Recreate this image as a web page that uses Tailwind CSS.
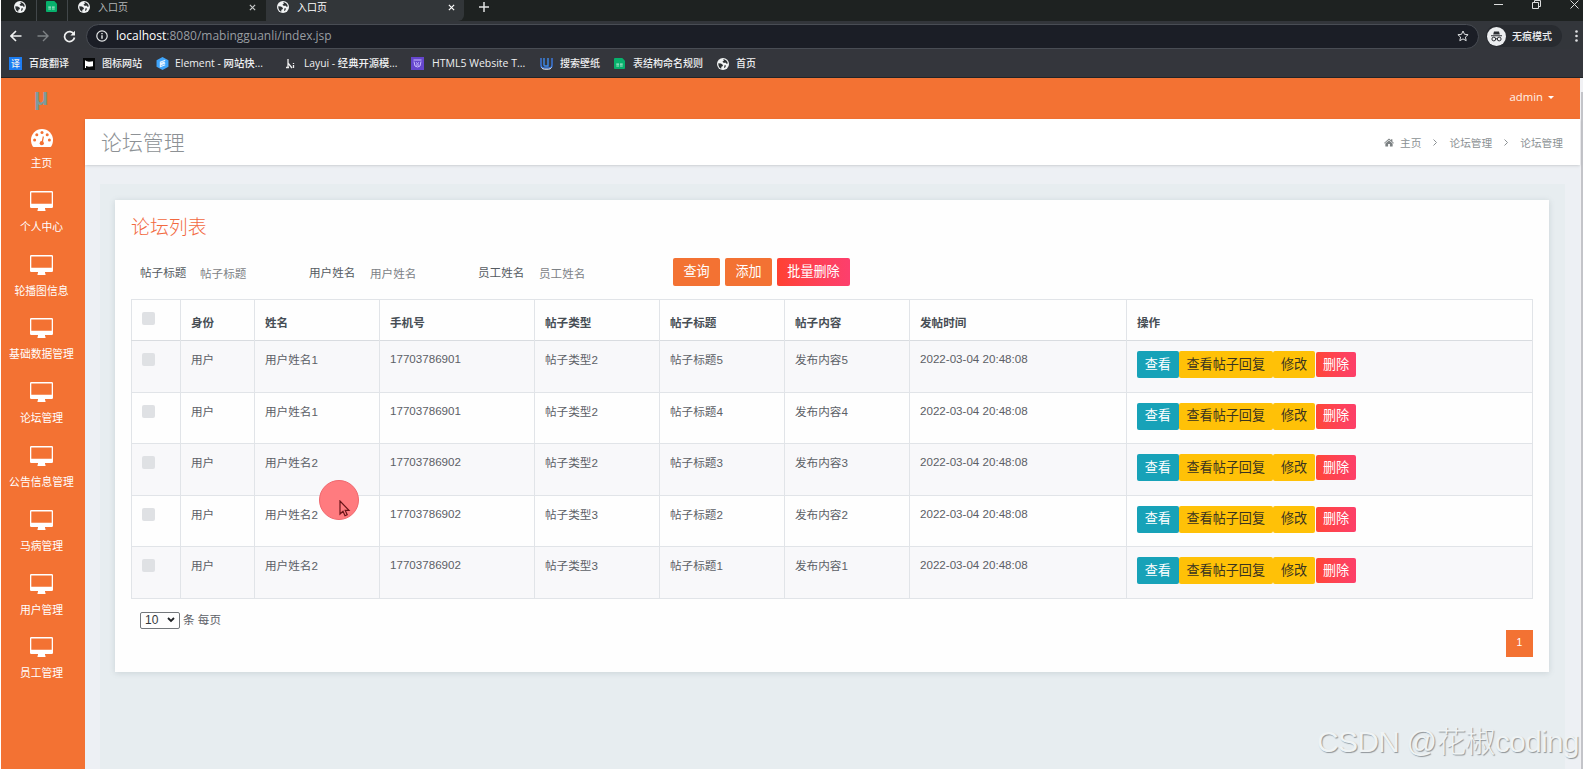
<!DOCTYPE html>
<html lang="zh-CN">
<head>
  <meta charset="UTF-8">
  <meta name="viewport" content="width=device-width, initial-scale=1.0">
  <title>入口页</title>
  <script src="https://cdn.jsdelivr.net/npm/@tailwindcss/browser@4"></script>
</head>
<body class="relative h-[769px] w-[1583px] overflow-hidden bg-white pl-px font-['Liberation_Sans','Noto_Sans_CJK_SC',sans-serif]">

  <svg class="hidden">
    <symbol id="globe" viewBox="0 0 12 12">
      <circle cx="6" cy="6" r="6" fill="#f1f3f4"/>
      <path d="M1.300 5.200 4 5.600l2 1.300-.4 1.300-1.200.5-.2 2C2.300 9.900 1.200 8 1.300 5.200zM6 1.200l1 1.300-1.600 1.200L7 5l1.300-.6 1.200 1.300 1.300-.2C10.600 3 8.600 1.200 6 1.200zM7.500 7.300l1.600.3-.9 1.900-1.200.4z" fill="#2b2f31"/>
    </symbol>
    <symbol id="sheet" viewBox="0 0 12 12">
      <path d="M0 1a1 1 0 0 1 1-1h8l3 3v8a1 1 0 0 1-1 1H1a1 1 0 0 1-1-1z" fill="#07b06c"/>
      <path d="M2.500 6h3v1.300h-3zM6.500 6h3v1.300h-3zM2.500 8.200h3v1.200h-3zM6.500 8.200h3v1.200h-3z" fill="#a8e8cb"/>
    </symbol>
    <symbol id="close" viewBox="0 0 8 8">
      <path d="M1 1l6 6M7 1 1 7" stroke="currentColor" stroke-width="1.400" fill="none"/>
    </symbol>
    <symbol id="desktop" viewBox="0 0 23 20">
      <path fill-rule="evenodd" d="M1.300 0h20.400A1.300 1.300 0 0 1 23 1.300v14.400a1.300 1.300 0 0 1-1.300 1.300H15v1.500h.5V20h-8v-1.500H8V17H1.300A1.300 1.300 0 0 1 0 15.700V1.300A1.300 1.300 0 0 1 1.300 0zM1.300 1.500v11.200h20.400V1.500z" fill="#fff"/>
    </symbol>
    <symbol id="dashboard" viewBox="0 0 22 18">
      <path d="M11 0a11 11 0 0 1 11 11c0 2.300-.6 4.300-1.600 6.200-.3.500-.7.800-1.200.8H2.800c-.5 0-.9-.3-1.200-.8C.6 15.300 0 13.300 0 11A11 11 0 0 1 11 0z" fill="#fff"/>
      <g fill="#f37233"><circle cx="3.600" cy="11" r="1.500"/><circle cx="5.800" cy="5.700" r="1.500"/><circle cx="11" cy="3.500" r="1.500"/><circle cx="16.200" cy="5.700" r="1.500"/><circle cx="18.400" cy="11" r="1.500"/><circle cx="10.800" cy="14.200" r="2.100"/></g>
      <path d="M11 14l1.400-6.500" stroke="#f37233" stroke-width="1.200"/>
    </symbol>
  </svg>

  <!-- Browser tabs -->
  <div class="flex h-[21px] bg-[#1e2221] text-[11px] leading-[15px] text-[#b4b7b8]">
    <div class="flex w-[35px] pl-[13px] pt-px"><svg class="size-3"><use href="#globe"/></svg></div>
    <div class="flex w-8 border-x border-[#42474a] pl-[9px] pt-px"><svg class="size-[11px]"><use href="#sheet"/></svg></div>
    <div class="flex w-[198px] pl-[10px] pt-px">
      <svg class="size-3"><use href="#globe"/></svg>
      <span class="ml-2 -mt-px w-[151px] text-[10px]">入口页</span>
      <svg class="mt-[3px] size-[7px] text-[#c8caca]"><use href="#close"/></svg>
    </div>
    <div class="flex w-[198px] rounded-br-md bg-[#323639] pl-[11px] pt-px text-white">
      <svg class="size-3"><use href="#globe"/></svg>
      <span class="ml-2 -mt-px w-[151px] text-[10px]">入口页</span>
      <svg class="mt-[3px] size-[7px]"><use href="#close"/></svg>
    </div>
    <svg class="ml-[15px] mt-[2px] size-[10px]" viewBox="0 0 10 10"><path d="M5 0v10M0 5h10" stroke="#e2e4e4" stroke-width="1.500"/></svg>
    <div class="ml-auto flex gap-[29px] pr-[4px] text-[#dcdddd]">
      <svg class="mt-1 h-[2px] w-[9px]"><path d="M0 .5h9" stroke="currentColor"/></svg>
      <svg class="h-[9px] w-[9px]" viewBox="0 0 9 9"><path d="M.5 2.500h6v6h-6zM2.500 2.500v-2h6v6h-2" stroke="currentColor" fill="none"/></svg>
      <svg class="size-[9px]" viewBox="0 0 9 9"><path d="M.5.500l8 8M8.500.500l-8 8" stroke="currentColor" fill="none"/></svg>
    </div>
  </div>

  <!-- Address bar -->
  <div class="flex h-[28px] items-center bg-[#33363b] pt-[2px]">
    <svg class="ml-[9px] size-[12px]" viewBox="0 0 12 12"><path d="M11.500 6H1.500M6 1 1 6l5 5" stroke="#f0f1f1" stroke-width="1.600" fill="none"/></svg>
    <svg class="ml-[15px] size-[12px]" viewBox="0 0 12 12"><path d="M.5 6h10M6 1l5 5-5 5" stroke="#7e8285" stroke-width="1.400" fill="none"/></svg>
    <svg class="ml-[14px] size-[13px]" viewBox="0 0 13 13"><path d="M11 4.200A5 5 0 1 0 11.500 7.500" stroke="#f0f1f1" stroke-width="1.700" fill="none"/><path d="M12 .8v4.600H7.400z" fill="#f0f1f1"/></svg>
    <div class="ml-[10px] flex h-[25px] w-[1393px] items-center rounded-full border border-[#494d54] bg-[#1b1e26] pl-[9px] pr-[9px]">
      <svg class="size-[12px]" viewBox="0 0 12 12"><circle cx="6" cy="6" r="5.200" stroke="#e6e8e9" stroke-width="1.200" fill="none"/><path d="M6 5.200v3.600M6 3v1.300" stroke="#e6e8e9" stroke-width="1.400"/></svg>
      <span class="ml-[8px] whitespace-nowrap font-['Open_Sans',sans-serif] text-[12px] text-[#999da1]"><span class="text-white">localhost</span>:8080/mabingguanli/index.jsp</span>
      <svg class="ml-auto size-[12px]" viewBox="0 0 12 12"><path d="M6 1l1.500 3.300 3.600.4-2.700 2.400.8 3.600L6 8.900l-3.200 1.800.8-3.600L.9 4.700l3.600-.4z" stroke="#dfe1e3" fill="none"/></svg>
    </div>
    <div class="ml-[7px] flex h-[22px] w-[76px] items-center rounded-full bg-[#282b30] pl-px">
      <svg class="size-[19px]" viewBox="0 0 19 19"><circle cx="9.500" cy="9.500" r="9.500" fill="#eceef0"/><path d="M6.200 7.500 7 4.500h5l.8 3zM4 8.200h11v1H4z" fill="#2b2e33"/><g stroke="#2b2e33" fill="none"><circle cx="6.800" cy="12" r="1.900"/><circle cx="12.200" cy="12" r="1.900"/><path d="M8.700 11.800h1.600"/></g></svg>
      <span class="ml-[6px] text-[10px] font-medium text-[#eceef0]">无痕模式</span>
    </div>
    <svg class="ml-[13px] h-3 w-[3px]" viewBox="0 0 3 12"><g fill="#dfe1e3"><circle cx="1.500" cy="1.500" r="1.300"/><circle cx="1.500" cy="6" r="1.300"/><circle cx="1.500" cy="10.500" r="1.300"/></g></svg>
  </div>

  <!-- Bookmarks -->
  <div class="flex h-[29px] items-center border-b border-[#222427] bg-[#34363c] pt-px font-['Open_Sans','Noto_Sans_CJK_SC',sans-serif] text-[10px] font-medium whitespace-nowrap text-[#eff0f1]">
    <div class="flex w-[74px] items-center pl-2"><span class="flex h-[13px] w-[13px] items-center justify-center bg-[#1d7df2] text-[9px]">译</span><span class="ml-[7px]">百度翻译</span></div>
    <div class="flex w-[71px] items-center pl-[8px]"><svg class="size-3" viewBox="0 0 12 12"><path d="M0 0h12v12H0z" fill="#08090a"/><path d="M2 2.500h1V10H2zM3 3l3 .8 4-.6v5l-4 .5-3-.8z" fill="#fff"/></svg><span class="ml-[7px]">图标网站</span></div>
    <div class="flex w-[129px] items-center pl-[10px]"><svg class="size-[13px]" viewBox="0 0 12 12"><path d="M6 0l5.500 3v6L6 12 .5 9V3z" fill="#3fa4fa"/><path d="M8.500 3 4 4.800v1.500l4-1.600M8.500 5.600 4 7.400V9l4.500-1.900" stroke="#e7f3ff" fill="none"/></svg><span class="ml-[6px] text-[10.400px]">Element - 网站快...</span></div>
    <div class="flex w-[127px] items-center pl-[10px]"><svg class="size-[11px]" viewBox="0 0 11 11"><path d="M3 1v9M3 5l4 5M8.500 5v1M8.500 7v3M1 9.500h3" stroke="#eee" stroke-width="1.300" fill="none"/></svg><span class="ml-[8px] text-[10.300px]">Layui - 经典开源模...</span></div>
    <div class="flex w-[129px] items-center pl-[9px]"><svg class="size-[13px]" viewBox="0 0 13 13"><path d="M0 0h13v13H0z" fill="#6546cd"/><path d="M2.500 3h8M3 4.500l1 4.500 2.500 1L9 9l1-4.500M5 5.500l1.500 1 1.500-1M5 8h3" stroke="#cbbcff" fill="none"/></svg><span class="ml-[8px] text-[10.500px]">HTML5 Website T...</span></div>
    <div class="flex w-[73px] items-center pl-[9px]"><svg class="size-[13px]" viewBox="0 0 13 13"><path d="M1 1v7q0 3 3 3h5q3 0 3-3V1" stroke="#3b77d8" stroke-width="1.500" fill="none"/><path d="M4 1v7q0 1 1 1h3V1" stroke="#3d8aec" stroke-width="1.400" fill="none"/><path d="M1.500 10.500q1 1.700 3 1.700h4q2 0 3-1.700" stroke="#e9eef8" fill="none"/></svg><span class="ml-[7px]">搜索壁纸</span></div>
    <div class="flex w-[103px] items-center pl-[10px]"><svg class="size-[11px]"><use href="#sheet"/></svg><span class="ml-[8px]">表结构命名规则</span></div>
    <div class="flex items-center pl-[10px]"><svg class="size-[12px]"><use href="#globe"/></svg><span class="ml-[7px]">首页</span></div>
  </div>

  <div class="flex h-[691px]">
    <!-- Sidebar -->
    <aside class="w-[84px] shrink-0 bg-[#f37233] text-center text-white">
      <div class="h-[41px] pt-[3px] pr-[4px] text-[24px] leading-[32px] font-bold text-[#7e9a9c]">μ</div>
      <nav id="menu"></nav>
    </aside>

    <div class="flex w-[1495px] shrink-0 flex-col">
      <header class="flex h-[41px] shrink-0 justify-end bg-[#f37233] pr-[26px] pt-[10px] font-['Open_Sans',sans-serif] text-[11.300px] leading-[18px] font-medium text-[#fff3ea]">
        admin <span class="ml-[5px] mt-[8px] h-0 w-0 border-x-[3px] border-t-[3px] border-x-transparent border-t-white"></span>
      </header>

      <div class="relative flex h-[46px] shrink-0 items-center bg-white pl-4 pr-[17px] pt-[2px] shadow-sm">
        <h1 class="text-[20.900px] font-light text-[#8d9195]">论坛管理</h1>
        <div class="ml-auto flex items-center text-[10.700px] text-[#8b9194]">
          <svg class="mr-[6px] h-[9px] w-[10px]" viewBox="0 0 11 9"><path d="M5.500 0 7.800 2V.8h1.400v2.500L11 5l-.6.700L5.500 1.500.6 5.700 0 5zM5.500 2.300l4 3.400V9H6.500V6.200h-2V9h-3V5.700z" fill="#7b8082"/></svg>
          <span>主页</span>
          <svg class="mx-[12px] h-[7px] w-[4px]" viewBox="0 0 4 7"><path d="M.5.500l3 3-3 3" stroke="#8b9194" fill="none"/></svg>
          <span>论坛管理</span>
          <svg class="mx-[12px] h-[7px] w-[4px]" viewBox="0 0 4 7"><path d="M.5.500l3 3-3 3" stroke="#8b9194" fill="none"/></svg>
          <span>论坛管理</span>
        </div>
      </div>

      <main class="flex-1 bg-[#edf0f4] px-[15px] pt-[19px]">
        <div class="h-full bg-[#e7edf0] px-[15px] pt-[16px]">
          <div class="h-[472px] w-[1434px] bg-[#fefefe] px-4 pt-[14px] shadow-[0_1px_6px_rgba(90,110,120,0.2)]">
            <h2 class="h-[28px] text-[18.900px] leading-[28px] font-light text-[#f2693f]">论坛列表</h2>

            <div class="mt-[15px] flex h-[30px] items-center pl-[9px] text-[11.600px] text-[#555b61]">
              <label class="w-[60px] pt-[2px]">帖子标题</label>
              <input class="w-[109px] pt-[4px] placeholder-[#7d8286]" placeholder="帖子标题">
              <label class="w-[61px] pt-[2px]">用户姓名</label>
              <input class="w-[108px] pt-[4px] placeholder-[#7d8286]" placeholder="用户姓名">
              <label class="w-[61px] pt-[2px]">员工姓名</label>
              <input class="w-[134px] pt-[4px] placeholder-[#7d8286]" placeholder="员工姓名">
              <div class="flex gap-[5px] text-[13.100px] text-white">
                <button class="h-[28px] w-[47px] rounded-[2px] bg-[#f37233]">查询</button>
                <button class="h-[28px] w-[47px] rounded-[2px] bg-[#f37233]">添加</button>
                <button class="h-[28px] w-[73px] rounded-[2px] bg-linear-to-r from-[#ff4131] to-[#fd3f6d]">批量删除</button>
              </div>
            </div>

            <table class="mt-[12px] w-[1402px] table-fixed border-collapse text-[11.600px] text-[#5c6066]">
              <colgroup>
                <col class="w-[49px]"><col class="w-[74px]"><col class="w-[125px]"><col class="w-[155px]"><col class="w-[125px]"><col class="w-[125px]"><col class="w-[125px]"><col class="w-[217px]"><col>
              </colgroup>
              <thead>
                <tr class="h-[41px] border border-[#e1e4e8] border-b-[#d9dce0] text-left text-[#474e55] *:border-r *:border-[#e1e4e8] *:pl-[10px] *:pt-[5px] *:font-bold">
                  <th><span class="mb-[9px] block size-[13px] rounded-[2px] bg-[#dfe1e4]"></span></th>
                  <th>身份</th><th>姓名</th><th>手机号</th><th>帖子类型</th><th>帖子标题</th><th>帖子内容</th><th>发帖时间</th><th>操作</th>
                </tr>
              </thead>
              <tbody id="rows"></tbody>
            </table>

            <div class="mt-[13px] flex h-[17px] items-center pl-[9px] text-[11.600px] text-[#5c6066]">
              <div class="flex h-[17px] w-[40px] items-center justify-between rounded-[2px] border border-[#73777b] pl-1 pr-1 text-[12px] text-[#33373b]">10
                <svg class="h-[6px] w-[8px]" viewBox="0 0 8 6"><path d="M1 1l3 3 3-3" stroke="#202326" stroke-width="1.800" fill="none"/></svg>
              </div>
              <span class="ml-[3px]">条 每页</span>
            </div>
            <div class="mt-px flex justify-end">
              <span class="flex size-[27px] items-center justify-center bg-[#f37233] text-[10.500px] text-white">1</span>
            </div>
          </div>
        </div>
      </main>
    </div>

    <!-- Scrollbar -->
    <div class="flex-1 bg-[#f1f1f4] pt-[14px]"><div class="ml-px h-full bg-[#c3c4c9]"></div></div>
  </div>

  <!-- Pointer highlight -->
  <div class="absolute left-[319px] top-[480px] size-[40px] rounded-full border border-[#f0676d] bg-[#ff7b7f]">
    <svg class="absolute left-[19px] top-[19px] h-[17px] w-[12px]" viewBox="0 0 12 17"><path d="M1 1v13l3-2.800 2 4.500 2.200-1-2-4.300H10z" stroke="#6b1519" stroke-width="1.200" fill="none"/></svg>
  </div>

  <div class="absolute left-[1317px] top-[720px] text-[30px] leading-[44px] tracking-[-0.75px] font-light whitespace-nowrap text-[#eff3f4] [text-shadow:1px_1px_1px_#8f9599]">CSDN @花椒coding</div>

  <script>
    var menu = ['主页', '个人中心', '轮播图信息', '基础数据管理', '论坛管理', '公告信息管理', '马病管理', '用户管理', '员工管理'];
    document.getElementById('menu').innerHTML = menu.map((name, i) => `
      <a class="flex h-[63.800px] flex-col items-center pt-[8px] pr-[3px]">
        ${i ? '<svg class="h-[20px] w-[23px] shrink-0"><use href="#desktop"/></svg>'
            : '<svg class="mt-[2px] h-[18px] w-[22px] shrink-0"><use href="#dashboard"/></svg>'}
        <span class="mt-[8px] text-[10.800px] leading-[16px] whitespace-nowrap">${name}</span>
      </a>`).join('');

    var posts = [
      ['用户姓名1', '17703786901', '帖子类型2', 5],
      ['用户姓名1', '17703786901', '帖子类型2', 4],
      ['用户姓名2', '17703786902', '帖子类型2', 3],
      ['用户姓名2', '17703786902', '帖子类型3', 2],
      ['用户姓名2', '17703786902', '帖子类型3', 1]
    ];
    document.getElementById('rows').innerHTML = posts.map(([name, phone, type, n]) => `
      <tr class="h-[51.500px] border border-[#e1e4e8] align-top leading-[18px] odd:bg-[#f8f8fa] *:border-r *:border-[#e1e4e8] *:pl-[10px] *:pt-[10px]">
        <td><span class="mt-[2px] block size-[13px] rounded-[2px] bg-[#dfe1e4]"></span></td>
        <td>用户</td>
        <td>${name}</td>
        <td><div class="-mt-px">${phone}</div></td>
        <td>${type}</td>
        <td>帖子标题${n}</td>
        <td>发布内容${n}</td>
        <td><div class="-mt-px">2022-03-04 20:48:08</div></td>
        <td>
          <div class="flex items-center text-[13.100px] text-[#3a3420]">
            <button class="h-[27px] w-[41.500px] rounded-[2px] bg-[#17a2b8] text-white">查看</button>
            <button class="h-[27px] w-[94.500px] rounded-[2px] bg-[#ffc107]">查看帖子回复</button>
            <button class="h-[27px] w-[42px] rounded-[2px] bg-[#ffc107]">修改</button>
            <button class="ml-px h-[25px] w-[40px] rounded-[2px] bg-linear-to-r from-[#ff4636] to-[#fd3f69] text-white">删除</button>
          </div>
        </td>
      </tr>`).join('');
  </script>
</body>
</html>
